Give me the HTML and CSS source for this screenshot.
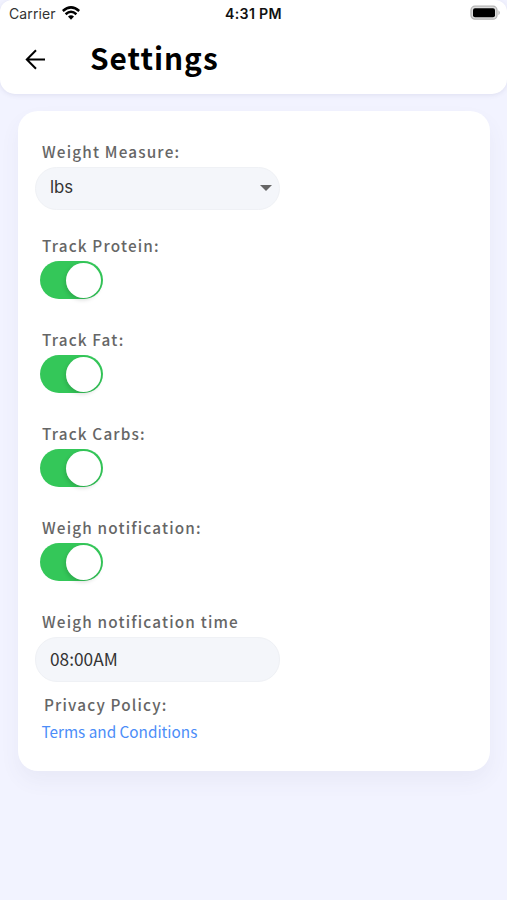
FILE: index.html
```html
<!DOCTYPE html>
<html lang="en">
<head>
<meta charset="utf-8">
<title>Settings</title>
<link rel="stylesheet" href="styles.css">
</head>
<body>
<header class="header">
  <div class="status">
    <div class="carrier"><span>Carrier</span>
      <svg class="wifi" width="18" height="14" viewBox="0 0 18 14" fill="none" stroke="#000" stroke-width="2.5"><path d="M.8 5Q9-2.2 17.2 5M3.6 8.2Q9 3.4 14.4 8.2"/><path d="M6 10.6Q9 8 12 10.6L9 13.7Z" fill="#000" stroke="none"/></svg>
    </div>
    <div class="clock">4:31 PM</div>
    <svg class="battery" width="31" height="16" viewBox="0 0 31 16"><rect x="1" y="1.2" width="26" height="13" rx="4" fill="#ddd" stroke="#b5b5b5" stroke-width="1.3"/><rect x="3" y="3.2" width="22" height="9" rx="2" fill="#000"/><path d="M28.5 5.2Q31 7.7 28.5 10.2Z" fill="#aaa"/></svg>
  </div>
  <div class="titlebar">
    <svg class="back" width="22" height="22" viewBox="0 0 22 22" fill="none" stroke="#000" stroke-width="2"><path d="M21 11.5H3M12 2.3L2.8 11.5L12 20.7"/></svg>
    <h1>Settings</h1>
  </div>
</header>
<main class="card">
  <section class="group"><div class="label">Weight Measure:</div><div class="field select"><span>lbs</span><i class="caret"></i></div></section>
  <section class="group"><div class="label">Track Protein:</div><div class="switch"><i></i></div></section>
  <section class="group"><div class="label">Track Fat:</div><div class="switch"><i></i></div></section>
  <section class="group"><div class="label">Track Carbs:</div><div class="switch"><i></i></div></section>
  <section class="group"><div class="label">Weigh notification:</div><div class="switch"><i></i></div></section>
  <section class="group time"><div class="label">Weigh notification time</div><div class="field"><span>08:00AM</span></div></section>
  <div class="label privacy">Privacy Policy:</div>
  <a class="link">Terms and Conditions</a>
</main>
</body>
</html>
```
FILE: styles.css
```css
* { box-sizing: border-box; }
body {
  margin: 0;
  height: 900px;
  overflow: hidden;
  background: #f2f3ff;
  font-family: "Noto Sans CJK JP", "Noto Sans", sans-serif;
}
.header {
  height: 94px;
  background: #fff;
  border-radius: 12px 12px 15px 15px;
  box-shadow: 0 1px 5px rgba(80, 80, 130, .12);
}
.status {
  height: 28px;
  display: grid;
  grid-template-columns: 1fr auto 1fr;
  align-items: center;
  padding: 0 6px;
  font-family: Inter, "Liberation Sans", sans-serif;
  font-size: 14px;
  color: #333;
}
.carrier { display: flex; align-items: center; gap: 6px; margin: -1px 0 0 3px; letter-spacing: .1px; }
.wifi { margin-top: -2px; }
.clock { margin-top: -1px; font-size: 14.2px; font-weight: 600; color: #111; letter-spacing: .3px; }
.battery { justify-self: end; margin-top: -2px; }
.titlebar { display: flex; align-items: center; height: 62px; padding-left: 24px; }
.back { flex: none; }
h1 {
  margin: 0 0 4px 44px;
  font-size: 29.8px;
  line-height: 44px;
  font-weight: 700;
  letter-spacing: 1px;
  color: #000;
}
.card {
  width: 472px;
  height: 660px;
  margin: 17px 0 0 18px;
  padding: 28px 0 0 17px;
  background: #fff;
  border-radius: 20px;
  box-shadow: 0 10px 20px rgba(80, 80, 120, .06);
}
.group { height: 94px; }
.label {
  height: 24px;
  padding-left: 7px;
  font-size: 15.3px;
  line-height: 24px;
  font-weight: 500;
  letter-spacing: 1.17px;
  color: #666;
  white-space: nowrap;
}
.field {
  width: 245px;
  height: 43px;
  margin-top: 4px;
  padding: 0 7px 3px 14px;
  display: flex;
  align-items: center;
  justify-content: space-between;
  border: 1px solid #eff1f5;
  border-radius: 22px;
  background: #f4f6fa;
  font-size: 17.3px;
  line-height: 24px;
  color: #333;
}
.select { font-family: Inter, sans-serif; font-size: 16.8px; }
.caret {
  border: 6px solid transparent;
  border-top-color: #666;
  border-bottom: 0;
  margin-top: 1px;
}
.time .field { height: 45px; padding-bottom: 1px; }
.switch {
  width: 63px;
  height: 38px;
  margin: 4px 0 0 5px;
  padding: 1.5px 2px;
  display: flex;
  justify-content: flex-end;
  border-radius: 19px;
  background: #34c759;
}
.switch i {
  width: 35px;
  height: 35px;
  border-radius: 50%;
  background: #fff;
  box-shadow: -1px 2px 4px rgba(0, 0, 0, .15);
}
.privacy { margin-top: -11px; padding-left: 9px; }
.link {
  display: block;
  margin: 3px 0 0 6.5px;
  font-size: 15.3px;
  line-height: 24px;
  color: #4b8df8;
}
```
